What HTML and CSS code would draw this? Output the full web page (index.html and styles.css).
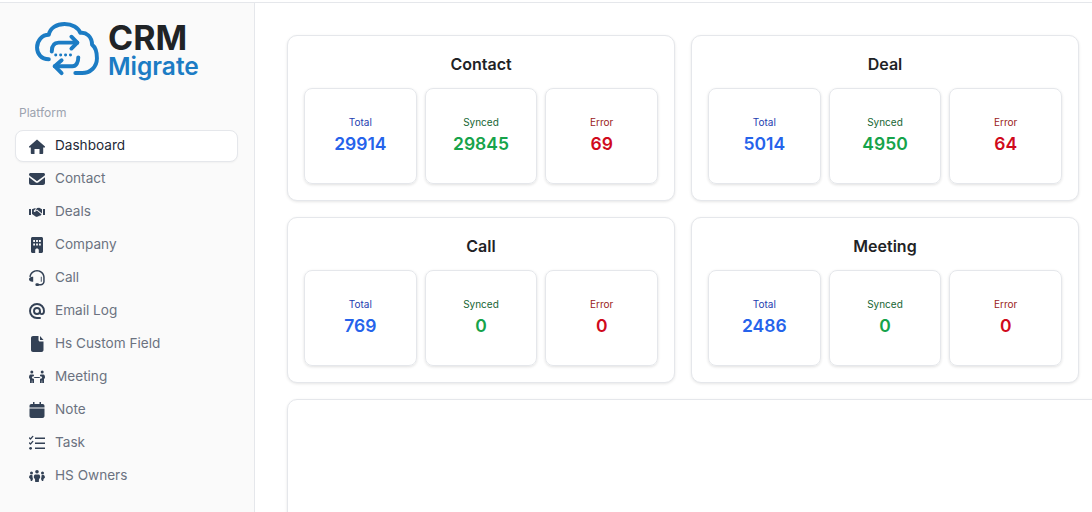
FILE: index.html
```html
<!DOCTYPE html>
<html lang="en">
<head>
<meta charset="utf-8">
<title>CRM Migrate</title>
<link rel="stylesheet" href="styles.css">
</head>
<body>
<div class="topline"></div>
<div class="layout">
  <aside class="sidebar">
    <div class="brand">
      <svg class="brand-mark" viewBox="0 0 64 56" fill="none" stroke="#1c7cc4" stroke-width="4" stroke-linecap="round" stroke-linejoin="round">
        <path d="M14 38 C6 38 2 32 2 26 C2 19 7 13 14 13 C15 6 22 2 30 2 C38 2 44 6 46 11 C52 10 58 15 58 23 C62 26 63 31 63 37 C63 46 56 52 48 52 L41 52"/>
        <path d="M17 30 C17 25 19 21 24 21 L43 21"/>
        <path d="M37 15 L43 21 L37 27"/>
        <path d="M44 36 C44 41 42 45 38 45 L20 45"/>
        <path d="M27 39 L20 45 L27 52"/>
        <path d="M21 33.500 H41" stroke-width="3" stroke-dasharray="0.100 4.900"/>
      </svg>
      <div class="brand-text">
        <span class="brand-crm">CRM</span>
        <span class="brand-migrate">Migrate</span>
      </div>
    </div>
    <div class="nav-label">Platform</div>
    <nav class="nav">
      <a class="nav-item active">
        <svg class="ico" viewBox="0 0 16 16"><path d="M8 1.500 L16 8.500 C16.300 9 16 9.500 15.500 9.500 H14.200 V15 C14.200 15.600 13.700 16 13.200 16 H10.500 V11 H5.500 V16 H2.800 C2.300 16 1.800 15.600 1.800 15 V9.500 H.5 C0 9.500 -.3 9 .0 8.500 Z"/></svg>
        <span>Dashboard</span>
      </a>
      <a class="nav-item">
        <svg class="ico" viewBox="0 0 16 16"><path d="M1.500 2 H14.500 C15.300 2 16 2.700 16 3.500 C16 4 15.800 4.400 15.400 4.700 L8.600 9.800 C8.200 10.100 7.800 10.100 7.400 9.800 L.6 4.700 C.2 4.400 0 4 0 3.500 C0 2.700 .7 2 1.500 2 Z M0 6.300 L6.800 11.400 C7.500 11.900 8.500 11.900 9.200 11.400 L16 6.300 V12 C16 13.100 15.100 14 14 14 H2 C.9 14 0 13.100 0 12 Z"/></svg>
        <span>Contact</span>
      </a>
      <a class="nav-item">
        <svg class="ico" viewBox="0 0 16 16"><path d="M0 5 H2 V11 H0 Z M14 5 H16 V11 H14 Z M3 5.200 L5.800 4.200 L7 4.500 L4.800 6.800 C4.500 7.300 5 8.100 5.800 7.900 L7.800 6.400 L12.600 10.400 L11.300 11.700 L10.800 11.300 L10.400 12.300 L9.500 12 L9 12.800 L8 12.400 L7.300 12.900 L3 10 Z M8 4 L10.200 3.800 L13 5.200 V9.600 L8 5.400 L6.200 6.800 Z"/></svg>
        <span>Deals</span>
      </a>
      <a class="nav-item">
        <svg class="ico" viewBox="0 0 16 16" fill-rule="evenodd"><path d="M3.500 0 H12.500 C13.300 0 14 .7 14 1.500 V14.500 C14 15.300 13.300 16 12.500 16 H9.800 V13.200 C9.800 12.300 9 11.600 8 11.600 C7 11.600 6.200 12.300 6.200 13.200 V16 H3.500 C2.700 16 2 15.300 2 14.500 V1.500 C2 .7 2.700 0 3.500 0 Z M4.200 3 V5 H6 V3 Z M7.100 3 V5 H8.900 V3 Z M10 3 V5 H11.800 V3 Z M4.200 6.500 V8.500 H6 V6.500 Z M7.100 6.500 V8.500 H8.900 V6.500 Z M10 6.500 V8.500 H11.800 V6.500 Z"/></svg>
        <span>Company</span>
      </a>
      <a class="nav-item">
        <svg class="ico" viewBox="0 0 16 16"><path d="M8 1.400 C4.500 1.400 2 4 1.800 7 H.4 C.6 3.100 3.800 0 8 0 C12.200 0 15.500 3.100 15.700 7 V11.500 C15.700 13.700 13.900 15.500 11.700 15.500 H9 V14 H11.700 C13.100 14 14.200 12.900 14.200 11.500 V7 C14 4 11.500 1.400 8 1.400 Z M3.300 6.800 H4.200 V11.800 H3.300 C1.500 11.800 0 10.800 0 9.300 C0 7.800 1.500 6.800 3.300 6.800 Z M11.800 6.800 H12.700 V11.800 H11.800 Z"/><rect x="6.400" y="13.300" width="3.600" height="2.700" rx="1.300"/></svg>
        <span>Call</span>
      </a>
      <a class="nav-item">
        <svg class="ico" viewBox="0 0 16 16"><path class="ico-line" d="M11 8 C11 9.700 9.700 11 8 11 C6.300 11 5 9.700 5 8 C5 6.300 6.300 5 8 5 C9.700 5 11 6.300 11 8 V9.300 C11 10.400 11.800 11.100 12.800 11.100 C14 11.100 15 10.100 15 8 C15 4.100 11.900 1 8 1 C4.100 1 1 4.100 1 8 C1 11.900 4.100 15 8 15 H11" stroke-width="1.900"/></svg>
        <span>Email Log</span>
      </a>
      <a class="nav-item">
        <svg class="ico" viewBox="0 0 16 16"><path d="M4 0 H9.500 V4 C9.500 4.800 10.200 5.500 11 5.500 H14.500 V14 C14.500 15.100 13.600 16 12.500 16 H4 C2.900 16 2 15.100 2 14 V2 C2 .9 2.900 0 4 0 Z M11 0 L14.500 4 H11 Z"/></svg>
        <span>Hs Custom Field</span>
      </a>
      <a class="nav-item">
        <svg class="ico" viewBox="0 0 16 16"><circle cx="2.800" cy="3" r="1.500"/><circle cx="13.200" cy="3" r="1.500"/><path d="M1.500 5.500 H4 C4.700 5.500 5 6 5 6.500 V7.300 H3.800 L2.800 8.500 L3.800 9.700 H5 V14 H3.300 V11.500 H2.800 V14 H1 V10 C.4 9.500 0 9 0 8.400 C0 7 .5 5.500 1.500 5.500 Z M12 5.500 H14.500 C15.500 5.500 16 7 16 8.400 C16 9 15.600 9.500 15 10 V14 H13.200 V11.500 H12.700 V14 H11 V9.700 H12.200 L13.200 8.500 L12.200 7.300 H11 V6.500 C11 6 11.300 5.500 12 5.500 Z M5.700 7.900 L4.600 8.500 L5.700 9.100 Z M10.300 7.900 L11.400 8.500 L10.300 9.100 Z M5.700 8.100 H10.300 V8.900 H5.700 Z"/></svg>
        <span>Meeting</span>
      </a>
      <a class="nav-item">
        <svg class="ico" viewBox="0 0 16 16"><path d="M4 0 H5.500 V2 H10.500 V0 H12 V2 H13.500 C14.900 2 15.500 2.900 15.500 4 V5.500 H.5 V4 C.5 2.900 1.100 2 2.500 2 H4 Z M.5 6.500 H15.500 V14 C15.500 15.100 14.600 16 13.500 16 H2.500 C1.400 16 .5 15.100 .5 14 Z"/></svg>
        <span>Note</span>
      </a>
      <a class="nav-item">
        <svg class="ico" viewBox="0 0 16 16"><path d="M6 2.500 H16 V4 H6 Z M6 7.500 H16 V9 H6 Z M6 12.500 H16 V14 H6 Z"/><path class="ico-line" d="M.4 3 L1.500 4 L3.800 1.400 M.4 8 L1.500 9 L3.800 6.400" stroke-width="1.300"/><circle cx="1.600" cy="13.300" r="1.400"/></svg>
        <span>Task</span>
      </a>
      <a class="nav-item">
        <svg class="ico" viewBox="0 0 16 16"><circle cx="2.500" cy="5" r="1.500"/><circle cx="8" cy="3.800" r="1.800"/><circle cx="13.500" cy="5" r="1.500"/><path d="M1.600 7 H3.300 C3.600 8 3.500 10 4 11 L3 13 H1.800 L1.400 11 L0 9.500 C0 8.500 .5 7 1.600 7 Z M12.700 7 H14.400 C15.500 7 16 8.500 16 9.500 L14.600 11 L14.200 13 H13 L12 11 C12.500 10 12.400 8 12.700 7 Z M6.200 6.500 H9.800 C10.900 6.500 11.200 8.200 11.200 9.500 L10 11.200 L9.800 14 H6.200 L6 11.200 L4.800 9.500 C4.800 8.200 5.100 6.500 6.200 6.500 Z"/></svg>
        <span>HS Owners</span>
      </a>
    </nav>
  </aside>
  <main class="main">
    <div class="grid">
      <section class="card">
        <h2 class="card-title">Contact</h2>
        <div class="stats">
          <div class="stat total"><span class="stat-label">Total</span><span class="stat-value">29914</span></div>
          <div class="stat synced"><span class="stat-label">Synced</span><span class="stat-value">29845</span></div>
          <div class="stat error"><span class="stat-label">Error</span><span class="stat-value">69</span></div>
        </div>
      </section>
      <section class="card">
        <h2 class="card-title">Deal</h2>
        <div class="stats">
          <div class="stat total"><span class="stat-label">Total</span><span class="stat-value">5014</span></div>
          <div class="stat synced"><span class="stat-label">Synced</span><span class="stat-value">4950</span></div>
          <div class="stat error"><span class="stat-label">Error</span><span class="stat-value">64</span></div>
        </div>
      </section>
      <section class="card">
        <h2 class="card-title">Call</h2>
        <div class="stats">
          <div class="stat total"><span class="stat-label">Total</span><span class="stat-value">769</span></div>
          <div class="stat synced"><span class="stat-label">Synced</span><span class="stat-value">0</span></div>
          <div class="stat error"><span class="stat-label">Error</span><span class="stat-value">0</span></div>
        </div>
      </section>
      <section class="card">
        <h2 class="card-title">Meeting</h2>
        <div class="stats">
          <div class="stat total"><span class="stat-label">Total</span><span class="stat-value">2486</span></div>
          <div class="stat synced"><span class="stat-label">Synced</span><span class="stat-value">0</span></div>
          <div class="stat error"><span class="stat-label">Error</span><span class="stat-value">0</span></div>
        </div>
      </section>
    </div>
    <section class="panel"></section>
  </main>
</div>
</body>
</html>
```
FILE: styles.css
```css
* { box-sizing: border-box; }
html, body { margin: 0; height: 512px; overflow: hidden; background: #fff; }
body { font-family: Inter, "Liberation Sans", sans-serif; color: #1f2937; }
.topline { height: 3px; border-bottom: 1px solid #e5e7eb; }
.layout { display: flex; height: 509px; }
.sidebar { width: 255px; flex: none; background: #fafafa; border-right: 1px solid #e5e7eb; padding: 19px 16px 0 15px; }
.brand { display: flex; gap: 10px; padding-left: 20px; height: 56px; align-items: flex-start; }
.brand-mark { width: 63px; height: 55px; flex: none; overflow: visible; }
.brand-text { display: flex; flex-direction: column; }
.brand-crm { font-size: 34px; font-weight: 700; line-height: 32px; color: #202326; }
.brand-migrate { font-size: 24.500px; font-weight: 600; line-height: 24px; color: #1c7cc4; }
.nav-label { margin: 27px 0 9px 4px; font-size: 12px; line-height: 16px; color: #9ca3af; }
.nav { display: flex; flex-direction: column; gap: 1px; }
.nav-item { display: flex; align-items: center; gap: 10px; height: 32px; padding: 0 13px 3px; font-size: 13.600px; color: #6b7280; border: 1px solid transparent; border-radius: 8px; }
.nav-item.active { background: #fff; border-color: #e5e7eb; color: #1f2937; box-shadow: 0 1px 2px rgba(0,0,0,.04); }
.ico { width: 16px; height: 16px; flex: none; margin-top: 2px; fill: #334155; }
.ico .ico-line { fill: none; stroke: #334155; stroke-linecap: round; stroke-linejoin: round; }
.main { flex: none; width: 837px; padding: 32px 0 0 32px; overflow: hidden; }
.grid { display: grid; grid-template-columns: 388px 388px; gap: 16px; width: 792px; }
.card { height: 166px; background: #fff; border: 1px solid #e5e7eb; border-radius: 10px; padding: 16px; box-shadow: 0 1px 3px rgba(0,0,0,.1); }
.card-title { margin: 0 0 12px; font-size: 16px; line-height: 24px; font-weight: 600; text-align: center; color: #1f2326; }
.stats { display: grid; grid-template-columns: repeat(3, 1fr); gap: 8px; }
.stat { height: 96px; display: flex; flex-direction: column; align-items: center; justify-content: center; gap: 3px; padding-bottom: 2px; border: 1px solid #e5e7eb; border-radius: 8px; box-shadow: 0 1px 3px rgba(0,0,0,.12); }
.stat-label { font-size: 10px; line-height: 14px; }
.stat-value { font-size: 17.500px; line-height: 24px; font-weight: 600; }
.total .stat-label { color: #1e40af; }
.total .stat-value { color: #2563eb; }
.synced .stat-label { color: #166534; }
.synced .stat-value { color: #16a34a; }
.error .stat-label { color: #991b1b; }
.error .stat-value { color: #d00a1c; }
.panel { width: 900px; height: 200px; margin-top: 16px; border: 1px solid #e5e7eb; border-radius: 10px; box-shadow: 0 1px 3px rgba(0,0,0,.1); }
```
